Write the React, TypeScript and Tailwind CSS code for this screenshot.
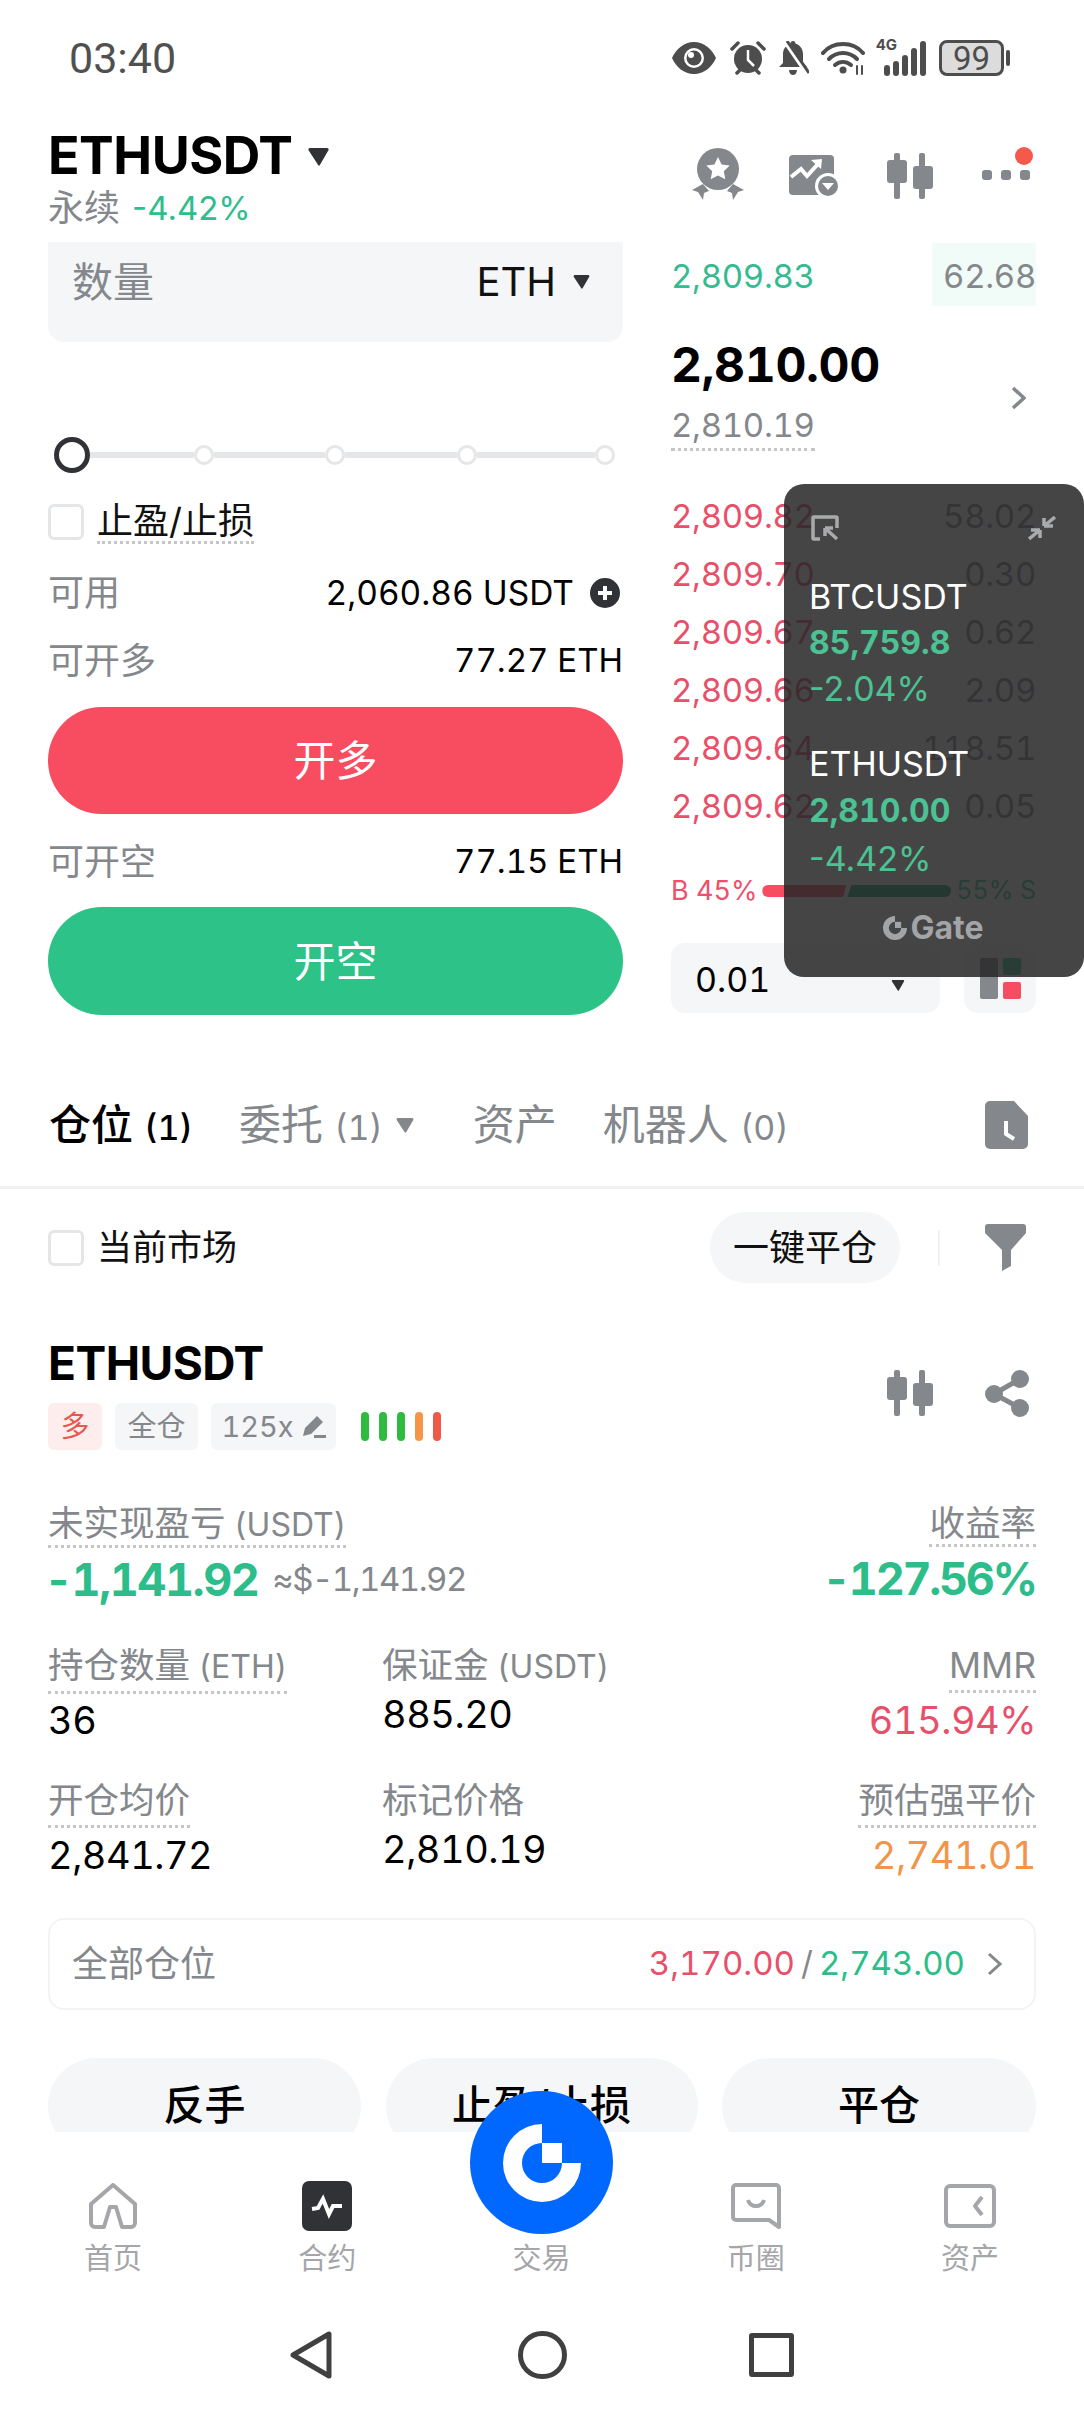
import type { ReactNode } from 'react';

const asks = [
  ['2,809.82', '58.02'],
  ['2,809.70', '0.30'],
  ['2,809.67', '0.62'],
  ['2,809.66', '2.09'],
  ['2,809.64', '118.51'],
  ['2,809.62', '0.05'],
];

function GateMark({ className }: { className: string }) {
  return (
    <svg viewBox="0 0 78 78" className={className} fill="currentColor">
      <path d="M39 0A39 39 0 1 0 78 39H59A20 20 0 1 1 39 19Z" />
      <rect x="39" y="19" width="20" height="20" />
    </svg>
  );
}

function Candles({ className }: { className: string }) {
  return (
    <svg viewBox="0 0 46 46" className={className} fill="#84888c">
      <rect x="7" y="0" width="6" height="46" rx="2" />
      <rect x="0" y="7" width="20" height="23" rx="3" />
      <rect x="32" y="0" width="6" height="46" rx="2" />
      <rect x="26" y="13" width="20" height="23" rx="3" />
    </svg>
  );
}

function Caret({ className }: { className: string }) {
  return (
    <svg viewBox="0 0 20 16" className={className} fill="currentColor">
      <path d="M1 1.5C1 .7 1.6 0 2.4 0h15.2c.8 0 1.4.7 1.4 1.5 0 .3-.1.6-.3.8l-7.5 12.9c-.4.7-1.1.7-1.5 0L1.3 2.3C1.1 2.1 1 1.8 1 1.5Z" />
    </svg>
  );
}

function Dotted({ children, className = '' }: { children: ReactNode; className?: string }) {
  return <span className={`inline-block border-b-[3px] border-dotted border-[#c3c5c7] ${className}`}>{children}</span>;
}

function StatusBar() {
  return (
    <div className="flex h-[116px] shrink-0 items-center justify-between pl-[69px] pr-[74px]">
      <span className="font-['Roboto'] text-[43px] leading-none text-[#505050]">03:40</span>
      <div className="flex items-center text-[#4d4d4d]">
        <svg viewBox="0 0 44 32" className="h-[32px] w-[44px]" fill="currentColor">
          <path fillRule="evenodd" d="M22 0c10 0 18 7 22 16-4 9-12 16-22 16S4 25 0 16C4 7 12 0 22 0Zm0 6a10 10 0 1 0 0 20 10 10 0 0 0 0-20Z" />
          <circle cx="22" cy="16" r="7.5" />
          <circle cx="19" cy="13" r="3" fill="#fff" />
        </svg>
        <svg viewBox="0 0 36 34" className="ml-[14px] h-[34px] w-[36px]" fill="currentColor">
          <circle cx="18" cy="18" r="14" />
          <path d="M18 9v10l6 6" stroke="#fff" strokeWidth="2.5" fill="none" />
          <path d="M2 8 8 2M34 8l-6-6M7 32l4-4M29 32l-4-4" stroke="currentColor" strokeWidth="3.5" strokeLinecap="round" />
        </svg>
        <svg viewBox="0 0 32 34" className="ml-[11px] h-[34px] w-[32px]" fill="currentColor">
          <path d="M16 0c1.5 0 2.5 1 2.500 2.500C23 4 26 8 26 13v9l4 4H2l4-4v-9c0-5 3-9 7.500-10.500C13.500 1 14.500 0 16 0Z" />
          <path d="M12 29h8c0 3-2 5-4 5s-4-2-4-5Z" />
          <path d="M8 0l22 32" stroke="#fff" strokeWidth="5" />
          <path d="M10 0l22 32" stroke="currentColor" strokeWidth="3" />
        </svg>
        <svg viewBox="0 0 44 34" className="ml-[12px] h-[34px] w-[44px]" fill="none" stroke="currentColor" strokeWidth="4" strokeLinecap="round">
          <path d="M2 12C12 0 32 0 42 12" />
          <path d="M8 18c8-8 20-8 28 0" />
          <path d="M14 24c5-4 11-4 16 0" />
          <circle cx="22" cy="29" r="3.500" fill="currentColor" stroke="none" />
          <path d="M36 25v8M41 25v8" strokeWidth="2" />
        </svg>
        <div className="relative ml-[11px] flex h-[36px] w-[50px] items-end justify-end gap-[3px]">
          <span className="absolute left-0 top-[-3px] text-[15px] font-bold leading-none">4G</span>
          <span className="h-[11px] w-[6px] rounded-full bg-[#4d4d4d]" />
          <span className="h-[15px] w-[6px] rounded-full bg-[#4d4d4d]" />
          <span className="h-[21px] w-[6px] rounded-full bg-[#4d4d4d]" />
          <span className="h-[28px] w-[6px] rounded-full bg-[#4d4d4d]" />
          <span className="h-[35px] w-[6px] rounded-full bg-[#4d4d4d]" />
        </div>
        <div className="ml-[13px] flex h-[36px] w-[65px] items-center justify-center rounded-[8px] border-[3px] border-[#4d4d4d] bg-[#dcdcdc]">
          <span className="font-['Roboto'] text-[33px] leading-none text-[#4d4d4d]">99</span>
        </div>
        <span className="ml-[2px] h-[16px] w-[4px] rounded-full bg-[#4d4d4d]" />
      </div>
    </div>
  );
}

function Header() {
  return (
    <div className="flex h-[126px] shrink-0 justify-between pl-[48px] pr-[54px]">
      <div>
        <div className="mt-[13px] flex items-center">
          <span className="text-[52px] font-bold leading-[54px] tracking-[-0.5px] text-black">ETHUSDT</span>
          <Caret className="ml-[14px] mt-[2px] h-[18px] w-[25px] text-[#303236]" />
        </div>
        <div className="mt-[6px] flex items-center text-[33px] leading-[38px]">
          <span className="text-[36px] text-[#84888c]">永续</span>
          <span className="ml-[12px] normal-nums text-[#2fbd8c]">-4.42%</span>
        </div>
      </div>
      <div className="relative mt-[32px] flex items-start">
        <svg viewBox="0 0 52 52" className="h-[52px] w-[52px]" fill="#84888c">
          <circle cx="26" cy="21" r="21" />
          <path d="m26 9 3.600 7.500 8.100 1.100-5.900 5.600 1.500 8.100L26 27.400l-7.300 3.900 1.500-8.100-5.900-5.600 8.100-1.100Z" fill="#fff" />
          <path d="M0 42 11 36l6 7-5 2-1 7-5-8ZM52 42l-11-6-6 7 5 2 1 7 5-8Z" />
        </svg>
        <svg viewBox="0 0 49 41" className="ml-[45px] mt-[7px] h-[41px] w-[49px]" fill="#84888c">
          <rect x="0" y="0" width="45" height="40" rx="4" />
          <path d="m2 22 10-8 6 7 11-12" stroke="#fff" strokeWidth="4" fill="none" />
          <path d="m22 5 11-1-1 10Z" fill="#fff" />
          <circle cx="39" cy="31" r="13" fill="#fff" />
          <circle cx="39" cy="31" r="10" />
          <path d="m33 28h12l-6 7Z" fill="#fff" />
        </svg>
        <Candles className="ml-[49px] mt-[5px] h-[46px] w-[46px]" />
        <div className="ml-[49px] mt-[22px] flex gap-[9px]">
          <span className="h-[10px] w-[10px] rounded-[3px] bg-[#84888c]" />
          <span className="h-[10px] w-[10px] rounded-[3px] bg-[#84888c]" />
          <span className="h-[10px] w-[10px] rounded-[3px] bg-[#84888c]" />
        </div>
        <span className="absolute right-[-3px] top-[-1px] h-[18px] w-[18px] rounded-full bg-[#f6584c]" />
      </div>
    </div>
  );
}

function Slider() {
  const dot = 'h-[20px] w-[20px] shrink-0 rounded-full border-[3px] border-[#e5e6e8] bg-white';
  const line = 'h-[6px] bg-[#e5e6e8]';
  return (
    <div className="mt-[95px] flex h-[36px] items-center pl-[6px]">
      <span className="h-[36px] w-[36px] shrink-0 rounded-full border-[5px] border-[#303236] bg-white" />
      <span className={`${line} w-[104px]`} />
      <span className={dot} />
      <span className={`${line} w-[111px]`} />
      <span className={dot} />
      <span className={`${line} w-[112px]`} />
      <span className={dot} />
      <span className={`${line} w-[118px]`} />
      <span className={dot} />
    </div>
  );
}

function OrderForm() {
  return (
    <div className="w-[575px] shrink-0">
      <div className="flex h-[100px] items-center justify-between rounded-b-[16px] bg-[#f5f6f8] pb-[20px] pl-[24px] pr-[32px]">
        <span className="text-[41px] leading-[44px] text-[#84888c]">数量</span>
        <div className="flex items-center">
          <span className="text-[40px] leading-[44px] text-[#111]">ETH</span>
          <Caret className="ml-[16px] h-[14px] w-[19px] text-[#303236]" />
        </div>
      </div>
      <Slider />
      <div className="mt-[29px] flex h-[46px] items-start">
        <span className="mt-[2px] h-[36px] w-[36px] rounded-[6px] border-[3px] border-[#e5e6e8]" />
        <Dotted className="ml-[13px] text-[36px] leading-[39px] text-[#111]">止盈/止损</Dotted>
      </div>
      <div className="mt-[23px] flex h-[44px] items-center justify-between">
        <span className="text-[36px] text-[#84888c]">可用</span>
        <div className="flex items-center">
          <span className="text-[33.500px] text-black">2,060.86 USDT</span>
          <svg viewBox="0 0 30 30" className="ml-[16px] mr-[3px] h-[30px] w-[30px]">
            <circle cx="15" cy="15" r="15" fill="#303236" />
            <path d="M15 8v14M8 15h14" stroke="#fff" strokeWidth="4" />
          </svg>
        </div>
      </div>
      <div className="mt-[24px] flex h-[44px] items-center justify-between">
        <span className="text-[36px] text-[#84888c]">可开多</span>
        <span className="text-[33px] text-black">77.27 ETH</span>
      </div>
      <div className="mt-[24px] flex h-[107px] items-center justify-center rounded-full bg-[#f84c61] text-[42px] text-white">开多</div>
      <div className="mt-[26px] flex h-[44px] items-center justify-between">
        <span className="text-[36px] text-[#84888c]">可开空</span>
        <span className="text-[33px] text-black">77.15 ETH</span>
      </div>
      <div className="mt-[23px] flex h-[108px] items-center justify-center rounded-full bg-[#2dc287] text-[42px] text-white">开空</div>
    </div>
  );
}

function OrderBook() {
  return (
    <div className="ml-[48px] w-[365px] shrink-0 pt-[1px]">
      <div className="flex h-[63px] items-center justify-between">
        <span className="pt-[5px] text-[33px] tracking-[-0.3px] text-[#35bb92]">2,809.83</span>
        <span className="flex h-full w-[104px] items-center justify-end bg-[#f1fbf7] pt-[5px] text-[33px] tracking-[-0.3px] text-[#84888c]">62.68</span>
      </div>
      <div className="mt-[32px] flex justify-between">
        <div>
          <div className="pt-[1px] text-[48px] font-bold leading-[52px] tracking-[-0.4px] text-black">2,810.00</div>
          <Dotted className="mt-[12px] text-[33px] leading-[45px] tracking-[-0.3px] text-[#84888c]">2,810.19</Dotted>
        </div>
        <svg viewBox="0 0 15 24" className="mr-[10px] mt-[48px] h-[24px] w-[15px]" fill="none" stroke="#84888c" strokeWidth="3.500">
          <path d="m2 2 11 10L2 22" />
        </svg>
      </div>
      <div className="mt-[37px]">
        {asks.map(([price, size]) => (
          <div key={price} className="flex h-[58px] items-center justify-between text-[33px] tracking-[-0.3px]">
            <span className="text-[#e8506a]">{price}</span>
            <span className="text-[#84888c]">{size}</span>
          </div>
        ))}
      </div>
      <div className="mt-[40px] flex h-[30px] items-center justify-between text-[27px]">
        <span className="text-[#f0506a]">B 45%</span>
        <div className="flex h-[12px] w-[189px]">
          <span className="h-full w-[84px] rounded-l-full bg-[#f84c61] [clip-path:polygon(0_0,100%_0,96%_100%,0_100%)]" />
          <span className="ml-[1px] h-full w-[104px] rounded-r-full bg-[#1f9b6c] [clip-path:polygon(4%_0,100%_0,100%_100%,0_100%)]" />
        </div>
        <span className="text-[25px] text-[#2dc287]">55% S</span>
      </div>
      <div className="mt-[37px] flex h-[70px] justify-between">
        <div className="flex w-[269px] items-center justify-between rounded-[14px] bg-[#f5f6f8] pl-[24px] pr-[34px]">
          <span className="pt-[2px] text-[34px] text-black">0.01</span>
          <Caret className="mt-[14px] h-[11px] w-[16px] text-[#303236]" />
        </div>
        <div className="flex w-[72px] items-center justify-center gap-[5px] rounded-[14px] bg-[#f5f6f8]">
          <span className="h-[41px] w-[18px] rounded-[2px] bg-[#84888c]" />
          <div className="flex h-[41px] w-[18px] flex-col justify-between">
            <span className="h-[17px] rounded-[2px] bg-[#2dc287]" />
            <span className="h-[17px] rounded-[2px] bg-[#f84c61]" />
          </div>
        </div>
      </div>
    </div>
  );
}

function Tabs() {
  return (
    <div className="mt-[77px] border-b-[3px] border-[#f0f1f3] pb-[28px]">
      <div className="flex h-[66px] items-center pl-[49px] pr-[56px]">
        <span className="text-[42px] font-medium leading-none text-black">仓位 <span className="text-[34px]">(1)</span></span>
        <span className="ml-[46px] text-[42px] leading-none text-[#84888c]">委托 <span className="text-[34px]">(1)</span></span>
        <Caret className="ml-[12px] h-[15px] w-[20px] text-[#84888c]" />
        <span className="ml-[58px] text-[42px] leading-none text-[#84888c]">资产</span>
        <span className="ml-[46px] text-[42px] leading-none text-[#84888c]">机器人 <span className="text-[34px]">(0)</span></span>
        <svg viewBox="0 0 43 48" className="ml-auto h-[48px] w-[43px]">
          <path d="M5 0h24l14 15v28a5 5 0 0 1-5 5H5a5 5 0 0 1-5-5V5a5 5 0 0 1 5-5Z" fill="#84888c" />
          <path d="M21 20v13l8 5" fill="none" stroke="#fff" strokeWidth="4" />
        </svg>
      </div>
    </div>
  );
}

function Stat({ label, unit, value, tone = 'text-black', right = false, plain = false }: { label: string; unit?: string; value: string; tone?: string; right?: boolean; plain?: boolean }) {
  const text = (
    <>
      {label}
      {unit && <span className="text-[32px]"> {unit}</span>}
    </>
  );
  return (
    <div className={right ? 'text-right' : ''}>
      <div className="h-[49px]">
        {plain ? (
          <span className="text-[35.500px] leading-[40px] text-[#84888c]">{text}</span>
        ) : (
          <Dotted className="pb-[4px] text-[35.500px] leading-[40px] text-[#84888c]">{text}</Dotted>
        )}
      </div>
      <div className={`text-[38px] leading-[50px] tracking-[-0.5px] ${plain ? 'mt-[-6px]' : ''} ${tone}`}>{value}</div>
    </div>
  );
}

function Position() {
  const tag = 'flex h-[47px] items-center justify-center rounded-[6px] bg-[#f5f6f8] text-[29px] text-[#84888c]';
  return (
    <div className="px-[48px]">
      <div className="mt-[23px] flex h-[71px] items-center">
        <span className="h-[36px] w-[36px] rounded-[6px] border-[3px] border-[#e5e6e8]" />
        <span className="ml-[13px] text-[35px] leading-none text-[#111]">当前市场</span>
        <span className="ml-auto flex h-[71px] w-[190px] items-center justify-center rounded-full bg-[#f5f6f8] text-[36px] text-[#111]">一键平仓</span>
        <span className="ml-[38px] h-[36px] w-[2px] bg-[#f0f1f3]" />
        <svg viewBox="0 0 41 47" className="ml-[45px] mr-[10px] h-[47px] w-[41px]" fill="#84888c">
          <path d="M0 3a3 3 0 0 1 3-3h35a3 3 0 0 1 3 3v6L26 26v16l-9 5V26L0 9Z" />
        </svg>
      </div>

      <div className="mt-[53px] flex items-center justify-between pr-[7px]">
        <div>
          <div className="text-[46px] font-bold leading-[54px] tracking-[-0.5px] text-black">ETHUSDT</div>
          <div className="mt-[13px] flex items-center">
            <span className={`${tag} w-[54px] bg-[#fdeeed] text-[#e8574f]`}>多</span>
            <span className={`${tag} ml-[13px] w-[83px]`}>全仓</span>
            <span className={`${tag} ml-[13px] w-[125px]`}>
              125x
              <svg viewBox="0 0 24 24" className="ml-[8px] h-[24px] w-[24px]" fill="#84888c">
                <path d="m15 1 6 6L9 19l-8 2 2-8ZM12 23h12v-3H12Z" />
              </svg>
            </span>
            <div className="ml-[25px] flex gap-[10px]">
              <span className="h-[29px] w-[8px] rounded-full bg-[#2fbb3f]" />
              <span className="h-[29px] w-[8px] rounded-full bg-[#2fbb3f]" />
              <span className="h-[29px] w-[8px] rounded-full bg-[#2fbb3f]" />
              <span className="h-[29px] w-[8px] rounded-full bg-[#f59546]" />
              <span className="h-[29px] w-[8px] rounded-full bg-[#ef5a48]" />
            </div>
          </div>
        </div>
        <div className="flex items-center">
          <Candles className="h-[46px] w-[46px]" />
          <svg viewBox="0 0 44 47" className="ml-[52px] h-[47px] w-[44px]" fill="#84888c">
            <circle cx="35" cy="9" r="9" />
            <circle cx="9" cy="24" r="9" />
            <circle cx="35" cy="38" r="9" />
            <path d="M35 9 9 24l26 14" fill="none" stroke="#84888c" strokeWidth="5" />
          </svg>
        </div>
      </div>

      <div className="mt-[54px] flex justify-between">
        <div>
          <Dotted className="text-[35.500px] leading-[40px] text-[#84888c]">
            未实现盈亏<span className="text-[32px]"> (USDT)</span>
          </Dotted>
          <div className="mt-[4px] flex h-[54px] items-center">
            <span className="ml-[-4px] pt-[2px] text-[45px] font-bold tracking-[-1.5px] text-[#2dbd8a]">-1,141.92</span>
            <span className="ml-[14px] pt-[2px] text-[33px] tracking-[-1.5px] text-[#84888c]">≈$-1,141.92</span>
          </div>
        </div>
        <div className="flex flex-col items-end">
          <Dotted className="text-[35.500px] leading-[40px] text-[#84888c]">收益率</Dotted>
          <div className="mt-[4px] flex h-[54px] items-center pt-[2px] text-[45px] font-bold tracking-[-2.3px] text-[#2dbd8a]">-127.56%</div>
        </div>
      </div>

      <div className="mt-[40px] grid grid-cols-[334px_1fr_auto]">
        <Stat label="持仓数量" unit="(ETH)" value="36" />
        <Stat label="保证金" unit="(USDT)" value="885.20" plain />
        <Stat label="MMR" value="615.94%" tone="text-[#e8506a]" right />
      </div>
      <div className="mt-[36px] grid grid-cols-[334px_1fr_auto]">
        <Stat label="开仓均价" value="2,841.72" />
        <Stat label="标记价格" value="2,810.19" plain />
        <Stat label="预估强平价" value="2,741.01" tone="text-[#f2954a]" right />
      </div>

      <div className="mt-[38px] flex h-[92px] items-center rounded-[16px] border-2 border-[#f2f3f4] pl-[22px] pr-[32px]">
        <span className="text-[36px] text-[#84888c]">全部仓位</span>
        <span className="ml-auto text-[33px] text-[#e8506a]">3,170.00</span>
        <span className="mx-[6px] text-[33px] text-[#84888c]">/</span>
        <span className="text-[33px] text-[#2dbd8a]">2,743.00</span>
        <svg viewBox="0 0 15 24" className="ml-[22px] h-[24px] w-[15px]" fill="none" stroke="#84888c" strokeWidth="3">
          <path d="m2 2 11 10L2 22" />
        </svg>
      </div>

      <div className="mt-[48px] flex justify-between">
        <span className="flex h-[96px] w-[313px] items-center justify-center rounded-full bg-[#f5f6f8] text-[41px] font-medium text-black">反手</span>
        <span className="flex h-[96px] w-[312px] items-center justify-center rounded-full bg-[#f5f6f8] text-[41px] font-medium text-black">止盈/止损</span>
        <span className="flex h-[96px] w-[314px] items-center justify-center rounded-full bg-[#f5f6f8] text-[41px] font-medium text-black">平仓</span>
      </div>
    </div>
  );
}

function NavItem({ label, children }: { label: string; children?: ReactNode }) {
  return (
    <div className="flex flex-col items-center">
      <div className="flex h-[46px] items-center justify-center">{children}</div>
      <span className="mt-[13px] text-[29px] leading-[34px] text-[#a4a6a9]">{label}</span>
    </div>
  );
}

function BottomNav() {
  return (
    <div className="relative h-[280px] shrink-0 bg-white">
      <div className="grid grid-cols-5 pl-[6px] pr-[7px] pt-[51px]">
        <NavItem label="首页">
          <svg viewBox="0 0 48 46" className="h-[46px] w-[48px]" fill="none" stroke="#a4a6a9" strokeWidth="4" strokeLinejoin="round">
            <path d="M24 2 46 21v19a4 4 0 0 1-4 4H33l-6-20h-6l-6 20H6a4 4 0 0 1-4-4V21Z" />
          </svg>
        </NavItem>
        <NavItem label="合约">
          <svg viewBox="0 0 50 50" className="h-[50px] w-[50px]">
            <rect width="50" height="50" rx="7" fill="#303236" />
            <path d="m10 28 6-1 5-9 6 15 4-8h9" fill="none" stroke="#fff" strokeWidth="4" />
          </svg>
        </NavItem>
        <NavItem label="交易" />
        <NavItem label="币圈">
          <svg viewBox="0 0 50 46" className="h-[46px] w-[50px]" fill="none" stroke="#a4a6a9" strokeWidth="4" strokeLinejoin="round">
            <path d="M5 2h40a3 3 0 0 1 3 3v39l-10-7H5a3 3 0 0 1-3-3V5a3 3 0 0 1 3-3Z" />
            <path d="M17 17c2 8 14 8 16 0" />
          </svg>
        </NavItem>
        <NavItem label="资产">
          <svg viewBox="0 0 52 44" className="h-[44px] w-[52px]" fill="none" stroke="#a4a6a9" strokeWidth="4" strokeLinejoin="round">
            <rect x="2" y="2" width="48" height="40" rx="4" />
            <path d="m38 13-7 9 7 9" />
          </svg>
        </NavItem>
      </div>
      <div className="mt-[55px] flex items-center pl-[290px]">
        <svg viewBox="0 0 42 48" className="h-[48px] w-[42px]" fill="none" stroke="#404040" strokeWidth="5" strokeLinejoin="round">
          <path d="M39 3v42L3 24Z" />
        </svg>
        <span className="ml-[186px] h-[48px] w-[49px] rounded-full border-[5px] border-[#404040]" />
        <span className="ml-[182px] h-[44px] w-[45px] rounded-[3px] border-[5px] border-[#404040]" />
      </div>
    </div>
  );
}

function FloatPanel() {
  return (
    <div className="absolute left-[784px] top-[484px] h-[493px] w-[300px] rounded-[20px] bg-[#272728]/[.86] pl-[25px] pr-[28px] pt-[30px]">
      <div className="flex items-center justify-between pl-[2px]">
        <svg viewBox="0 0 28 26" className="h-[26px] w-[28px]" fill="none" stroke="#a9aaab" strokeWidth="3.500">
          <path d="M9 24H3a1 1 0 0 1-1-1V3a1 1 0 0 1 1-1h22a1 1 0 0 1 1 1v10" />
          <path d="m14 13 12 11M14 13h8M14 13v8" />
        </svg>
        <svg viewBox="0 0 28 28" className="h-[28px] w-[28px]" fill="none" stroke="#a9aaab" strokeWidth="3.500">
          <path d="m16 12 11-9M16 12h9M16 12V4M12 16 1 25M12 16H3M12 16v8" />
        </svg>
      </div>
      <div className="mt-[32px] text-[34px] leading-[46px] text-white">BTCUSDT</div>
      <div className="text-[32px] font-bold leading-[46px] text-[#4cc294]">85,759.8</div>
      <div className="text-[34px] normal-nums leading-[46px] text-[#4cc294]">-2.04%</div>
      <div className="mt-[29px] text-[34px] leading-[46px] text-white">ETHUSDT</div>
      <div className="text-[32px] font-bold leading-[48px] text-[#4cc294]">2,810.00</div>
      <div className="text-[34px] normal-nums leading-[48px] text-[#4cc294]">-4.42%</div>
      <div className="mt-[27px] flex items-center justify-center pl-[2px] text-[#a3a4a5]">
        <GateMark className="h-[24px] w-[24px]" />
        <span className="ml-[3px] text-[32px] font-bold leading-[36px]">Gate</span>
      </div>
    </div>
  );
}

export default function App() {
  return (
    <div className="relative flex h-[2412px] w-[1084px] flex-col overflow-hidden bg-white tabular-nums [font-family:Inter,'Noto_Sans_CJK_SC',sans-serif]">
      <StatusBar />
      <Header />
      <main className="min-h-0 flex-1 overflow-hidden">
        <div className="flex px-[48px]">
          <OrderForm />
          <OrderBook />
        </div>
        <Tabs />
        <Position />
      </main>
      <BottomNav />
      <FloatPanel />
      <div className="absolute left-[470px] top-[2091px] flex h-[143px] w-[143px] items-center justify-center rounded-full bg-[#0068ff] text-white">
        <GateMark className="h-[78px] w-[78px]" />
      </div>
    </div>
  );
}
